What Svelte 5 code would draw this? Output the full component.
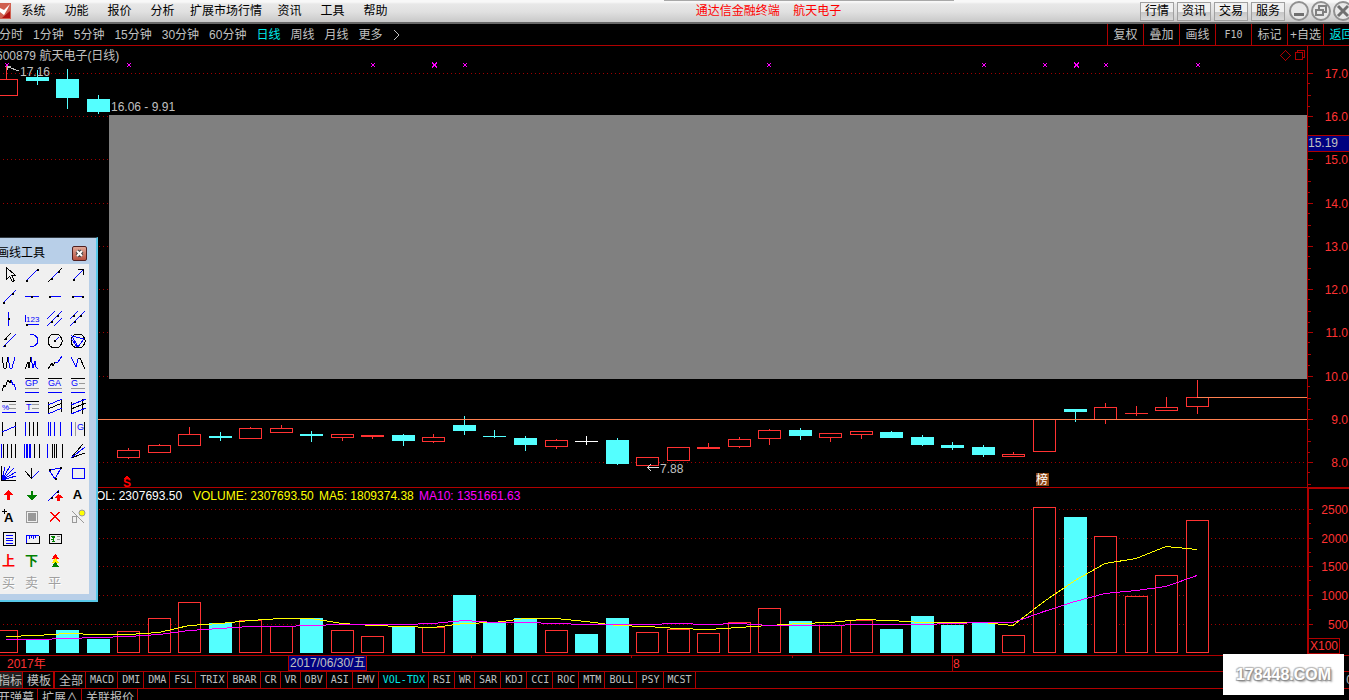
<script>
    const menus = ["系统", "功能", "报价", "分析", "扩展市场行情", "资讯", "工具", "帮助"];
    const shortcuts = ["行情", "资讯", "交易", "服务"];
    const periods = ["分时", "1分钟", "5分钟", "15分钟", "30分钟", "60分钟", "日线", "周线", "月线", "更多"];
    const actions = ["复权", "叠加", "画线", "F10", "标记", "+自选", "返回"];
    const indicators = [
        "MACD", "DMI", "DMA", "FSL", "TRIX", "BRAR", "CR", "VR", "OBV", "ASI", "EMV", "VOL-TDX",
        "RSI", "WR", "SAR", "KDJ", "CCI", "ROC", "MTM", "BOLL", "PSY", "MCST"
    ];

    let period = $state("日线");
    let indicator = $state("VOL-TDX");
    let showTools = $state(true);

    const STEP = 30.53;
    const cx = (i) => Math.round(6 + i * STEP);

    // kind, body top, body bottom, high, low, volume top, ma5, ma10
    const days = [
        ["up", 79, 95, 64, 95, 630, 636, 639],
        ["down", 77, 80, 70, 84, 640, 635, 639],
        ["down", 79, 97, 69, 108, 630, 633, 638],
        ["down", 99, 111, 95, 113, 639, 634, 637],
        ["up", 450, 457, 448, 458, 631, 634, 636],
        ["up", 445, 452, 444, 452, 618, 632, 634],
        ["up", 434, 445, 427, 445, 602, 625, 630],
        ["down", 436, 437, 432, 440, 623, 623, 628],
        ["up", 428, 438, 427, 438, 620, 620, 626],
        ["up", 428, 432, 425, 432, 626, 618, 626],
        ["down", 434, 435, 431, 441, 618, 618, 625],
        ["up", 434, 437, 434, 440, 630, 623, 624],
        ["up", 435, 436, 435, 438, 636, 625, 624],
        ["down", 435, 440, 434, 445, 626, 626, 624],
        ["up", 437, 441, 434, 442, 627, 627, 623],
        ["down", 425, 430, 416, 434, 595, 623, 620],
        ["down", 436, 436, 430, 437, 622, 622, 622],
        ["down", 438, 444, 436, 450, 618, 618, 622],
        ["up", 440, 446, 439, 448, 630, 618, 623],
        ["flat", 441, 441, 436, 444, 634, 621, 624],
        ["down", 440, 463, 438, 464, 618, 625, 624],
        ["up", 457, 465, 457, 465, 632, 626, 624],
        ["up", 447, 460, 447, 460, 629, 628, 623],
        ["up", 447, 448, 443, 448, 633, 629, 624],
        ["up", 439, 446, 437, 447, 622, 627, 623],
        ["up", 430, 438, 429, 444, 608, 625, 625],
        ["down", 430, 435, 428, 439, 621, 623, 625],
        ["up", 433, 437, 433, 441, 625, 622, 625],
        ["up", 431, 434, 431, 438, 620, 619, 624],
        ["down", 432, 437, 431, 437, 629, 620, 624],
        ["down", 437, 444, 435, 445, 616, 622, 624],
        ["down", 445, 447, 442, 449, 625, 622, 623],
        ["down", 447, 454, 445, 456, 622, 622, 622],
        ["up", 454, 456, 452, 456, 635, 625, 622],
        ["up", 419, 451, 419, 451, 507, 601, 611],
        ["down", 409, 411, 409, 421, 517, 580, 601],
        ["up", 407, 419, 403, 423, 536, 563, 593],
        ["up", 413, 413, 406, 415, 596, 558, 590],
        ["up", 407, 410, 397, 410, 575, 546, 586],
        ["up", 397, 406, 380, 413, 520, 549, 575]
    ].map(([kind, top, bottom, high, low, vol, ma5, ma10], i) => ({ x: cx(i), kind, top, bottom, high, low, vol, ma5, ma10 }));

    const line = (key) => days.map((d) => `${d.x},${d[key] + 0.5}`).join(" ");

    const prices = [17, 16, 15, 14, 13, 12, 11, 10, 9, 8].map((p, i) => ({ label: p.toFixed(1), y: Math.round(73 + i * 43.22) }));
    const volumes = [2500, 2000, 1500, 1000, 500].map((v, i) => ({ label: v, y: Math.round(509 + i * 28.7) }));
    const marks = [7, 129, 373, 434, 465, 769, 984, 1045, 1076, 1106, 1198];
    const bigMarks = [434, 1076];

    // k black, b blue, s grey, r red, g green strokes; dots are 3px handles
    const tools = [
        { name: "选择", k: "M7.500 2.500v12l3-3 3 5 2-1-3-5h4z" },
        { name: "线段", b: "M5 15L15 5", dots: [[4.5, 15.5], [15.5, 4.5]] },
        { name: "直线", k: "M3 17L17 3", b: "M6 14L14 6", dots: [[6.5, 13.5], [13.5, 6.5]] },
        { name: "箭头", b: "M5 15L15 5", k: "M10 4.500h5.500v5.500", dots: [[5.5, 14.5]] },
        { name: "射线", b: "M4 16L17 3", dots: [[4.5, 15.5], [13.5, 6.5]] },
        { name: "水平线", b: "M3 9.500h14", dots: [[9.5, 9.5]] },
        { name: "水平射线", b: "M4 9.500h12", dots: [[4.5, 9.5]] },
        { name: "水平线段", b: "M4 9.500h12", dots: [[4.5, 9.5], [14.5, 9.5]] },
        { name: "垂直线", b: "M9.500 3v14", dots: [[9.5, 9.5]] },
        { name: "价格标注", b: "M4 15.500h13M3.500 6v7", label: "123", size: 8, lx: 4, ly: 13, dots: [[4.5, 15.5]] },
        { name: "平行线", b: "M2 10L10 2M2 17L17 2M9 17L17 9", dots: [[6.5, 12.5], [12.5, 6.5]] },
        { name: "平行射线", b: "M2 10L10 2M2 17L17 2", dots: [[6.5, 12.5], [12.5, 6.5], [5.5, 6.5]] },
        { name: "通道线", k: "M5 9L12 2", b: "M4 16L17 3", dots: [[6.5, 7.5], [5.5, 14.5]] },
        { name: "圆弧", b: "M8 3.500h3q5 2 5 6t-5 6h-3" },
        { name: "圆", k: "M10 3a7 7 0 1 0 .1 0", b: "M10 10L14 6", dots: [[9.5, 9.5]] },
        { name: "外接圆", k: "M10 3a7 7 0 1 0 .1 0", b: "M4 5L16 8 10 16zM3.500 8L9 16" },
        { name: "W形", k: "M3 4L5 15 7 15 9 4", b: "M9 4L11 15 13 15 16 4" },
        { name: "头肩形", k: "M3 16L6 9 7 15 9 4", b: "M9 4L11 15 13 8 14 14 16 16" },
        { name: "上升浪", k: "M3 16L7 10 8 13 10 9", b: "M10 9L13 9 17 3" },
        { name: "下降浪", b: "M3 4L8 14 10 6", k: "M10 6L12 5 17 16" },
        { name: "波浪", k: "M3 16L5 10 6 12 9 5 11 8 12 5", b: "M12 5L14 10 15 9 17 15" },
        { name: "黄金价位", k: "M3 3.500h14", s: "M3 13.500h14", b: "M3 17h14", label: "GP", size: 9, lx: 3, ly: 11 },
        { name: "黄金目标", k: "M3 3.500h14", s: "M3 13.500h14", b: "M3 17h14", label: "GA", size: 9, lx: 3, ly: 11 },
        { name: "黄金分割", k: "M3 3.500h14", s: "M11 8.500h6M3 13.500h14", b: "M3 17h14", label: "G", size: 9, lx: 3, ly: 11 },
        { name: "百分比线", k: "M3 4.500h14", s: "M10 7.500h7M10 11.500h7", b: "M3 15.500h14", label: "%", size: 8, lx: 3, ly: 13 },
        { name: "波段线", k: "M3 4.500h14", s: "M10 7.500h7M10 11.500h7", b: "M3 15.500h14", label: "T", size: 9, lx: 4, ly: 13 },
        { name: "线性回归", k: "M3.500 5v12M16.500 2v13M3 12L17 6", b: "M3 8L17 2M3 17L17 11" },
        { name: "线性回归带", k: "M3.500 5v12M14.500 2v15M3 12L18 6", b: "M3 8L18 2M3 17L18 11" },
        { name: "回归通道", k: "M3.500 3v14M16.500 3v14", b: "M3 13L17 7" },
        { name: "周期线", b: "M3.500 3v14", k: "M7.500 3v14M11.500 3v14M15.500 3v14" },
        { name: "费氏周期", b: "M3.500 3v14M5.500 3v14M9.500 3v14M15.500 3v14" },
        { name: "甘氏周期", b: "M3.500 3v14", s: "M7.500 3v14", k: "M16.500 3v14", label: "G", size: 9, lx: 9, ly: 11 },
        { name: "阻速周期", b: "M2.500 3v14", k: "M4.500 3v14M8.500 3v14M12.500 3v14M16.500 3v14" },
        { name: "对称周期", b: "M2.500 3v14M4.500 3v14M5.500 3v14M7.500 3v14M8.500 3v14", k: "M12.500 3v14M17.500 3v14" },
        { name: "时间周期", b: "M2.500 3v14", k: "M7.500 3v14M9.500 3v14M11.500 3v14M17.500 3v14" },
        { name: "阻速线", k: "M3 17L15 3M3 17L17 12", b: "M3 17L17 6" },
        { name: "甘氏线", k: "M2.500 3v14.500h14", b: "M3 17L6 4M3 17L11 3M3 17L15 5M3 17L17 9M3 17L17 13" },
        { name: "安德鲁线", k: "M9.500 5v10M3 8L10 16", b: "M10 15L17 8" },
        { name: "三角形", b: "M4 7L16 5 10 16z", dots: [[4.5, 6.5], [15.5, 4.5], [10.5, 15.5]] },
        { name: "矩形", b: "M4 5.500h12.500v10h-12.500z" },
        { name: "上涨标记", r: "M9.500 5v10M8.500 6v9M10.500 6v9M5 9.500h9M6 8.500h7M7 7.500h5M8 6.500h3" },
        { name: "下跌标记", g: "M9.500 6v9M10.500 6v9M5 10.500h10M6 11.500h8M7 12.500h6M8 13.500h4" },
        { name: "拐点标记", b: "M3 16L14 5", r: "M13.500 9v7M12.500 10v6M14.500 10v6M10 12.500h8M11 11.500h6M12 10.500h4", dots: [[6.5, 12.5], [12.5, 6.5]] },
        { name: "文字", char: "A", tone: "black" },
        { name: "添加文字", char: "A", tone: "black", k: "M3 4.500h5M5.500 2v5" },
        { name: "全选", s: "M4.500 4.500h11v11h-11zM6 7.500h8M6 8.500h8M6 9.500h8M6 10.500h8M6 11.500h8M6 12.500h8M6 6.500h8M6 13.500h8" },
        { name: "删除", r: "M5 5L15 15M15 5L5 15M6 5L15 14M14 5L5 14" },
        { name: "隐藏", s: "M4.500 9.500h4v6h-4zM4 4L16 16", ball: true },
        { name: "列表", k: "M4.500 3.500h11.500v13h-11.500z", b: "M7 6.500h7M7 9.500h7M7 11.500h7M7 14.500h7" },
        { name: "测量", k: "M4 14.500h13v-8", b: "M4.500 14v-8h12M7.500 6v4M9.500 6v3M11.500 6v4M13.500 6v3" },
        { name: "图片", k: "M4.500 5.500h12v9h-12z", g: "M6 7.500h4M7 8.500h3M6 10.500h3M7 12.500h3M8.500 7v6", s: "M12 7.500h3M12 10.500h3" },
        { name: "", blank: true },
        { name: "上", char: "上", tone: "red" },
        { name: "下", char: "下", tone: "green" },
        { name: "级别", stack: true },
        { name: "", blank: true },
        { name: "买", char: "买", tone: "silver" },
        { name: "卖", char: "卖", tone: "silver" },
        { name: "平", char: "平", tone: "silver" }
    ];
</script>

<div class="app">
    <header>
        <svg class="logo" width="12" height="16" viewBox="0 0 12 16" aria-hidden="true">
            <rect width="11" height="16" fill="#d06050" />
            <path d="M0 5L4 7 10 1L7 7 4 12 0 9z" fill="#fff" />
            <path d="M2 15L10 8V15z" fill="#b01010" />
        </svg>
        <nav class="menu">
            {#each menus as item}
                <button>{item}</button>
            {/each}
        </nav>
        <h1>通达信金融终端&nbsp;&nbsp;&nbsp; 航天电子</h1>
        <div class="shortcuts">
            {#each shortcuts as item}
                <button>{item}</button>
            {/each}
        </div>
        <div class="window-buttons">
            <button aria-label="最小化">
                <svg width="16" height="16" viewBox="0 0 16 16"><path d="M3 11.500h10" stroke="#707070" stroke-width="3" /></svg>
            </button>
            <button aria-label="还原">
                <svg width="16" height="16" viewBox="0 0 16 16" fill="none" stroke="#808080" stroke-width="2"><path d="M6 6V3h7v6h-3M3 7h7v5H3z" /></svg>
            </button>
            <button aria-label="关闭">
                <svg width="16" height="16" viewBox="0 0 16 16" stroke="#707070" stroke-width="3"><path d="M3 3L13 13M13 3L3 13" /></svg>
            </button>
        </div>
        <span class="tab-shadow"></span>
    </header>

    <div class="toolbar">
        <nav class="periods">
            {#each periods as item}
                <button class:active={item === period} onclick={() => (period = item)}>{item}</button>
            {/each}
            <svg width="8" height="12" viewBox="0 0 8 12" fill="none" stroke="#c0c0c0"><path d="M1 1L6 6 1 11" /></svg>
        </nav>
        <div class="actions">
            {#each actions as item}
                <button class:active={item === "返回"} class:mono={item === "F10"}>{item}</button>
            {/each}
        </div>
    </div>

    <svg class="chart" viewBox="0 46 1349 442" role="img" aria-label="航天电子日线">
        <g class="crisp">
            {#each prices as p}
                <line class="dots" x1="3" x2="1307" y1={p.y + 0.5} y2={p.y + 0.5} />
                <rect class="dark" x="1308" y={p.y} width="5" height="1" />
                <rect class="dark" x="1308" y={p.y + 10} width="2" height="1" />
                <rect class="dark" x="1308" y={p.y + 22} width="3" height="1" />
                <rect class="dark" x="1308" y={p.y + 33} width="2" height="1" />
            {/each}
            <rect x="109" y="115" width="1198" height="264" fill="#808080" />
            {#each days as d}
                <g class={d.kind}>
                    {#if d.bottom - d.top < 2 || d.kind === "down"}
                        <rect class="solid" x={d.x - 11} y={d.top} width="23" height={d.bottom - d.top + 1} />
                        <rect class="solid" x={d.x} y={d.high} width="1" height={d.low - d.high + 1} />
                    {:else}
                        <rect class="solid" x={d.x} y={d.high} width="1" height={d.top - d.high} />
                        <rect class="solid" x={d.x} y={d.bottom} width="1" height={d.low - d.bottom + 1} />
                        <rect class="hollow" x={d.x - 10.5} y={d.top + 0.5} width="22" height={d.bottom - d.top} />
                    {/if}
                </g>
            {/each}
            <rect x="98" y="419" width="1209" height="1" fill="#ff8050" />
            <rect x="1197" y="397" width="110" height="1" fill="#ff8050" />
            {#each marks as x}
                {#if bigMarks.includes(x)}
                    <path d="M{x - 2} 62.500L{x + 3} 67.500M{x + 3} 62.500L{x - 2} 67.500" stroke="#f0f" stroke-width="2" />
                {:else}
                    <path d="M{x - 2} 63L{x + 2} 67M{x + 2} 63L{x - 2} 67" stroke="#f0f" />
                {/if}
            {/each}
            <path d="M8 67L19 71M7 70V66.500H11" fill="none" stroke="#c0c0c0" />
            <path d="M647 467.500H659M651 464L647.500 467.500 651 471" fill="none" stroke="#e0e0e0" />
            <path d="M1285.500 50.500L1290.500 55.500 1285.500 60.500 1280.500 55.500zM1295.500 52.500h7v7h-7zM1297.500 52V50.500h7v7h-2" fill="none" stroke="#b00000" />
            <path d="M124 478.500H130M125 477.500H129M126 476.500H128" stroke="red" />
            <rect x="1036" y="473" width="13" height="13" fill="#8b4513" />
            <rect class="dark" x="1307" y="46" width="1" height="442" />
            <rect class="dark" x="0" y="487" width="1349" height="1" />
            <rect class="dark" x="1308" y="135" width="41" height="17" />
            <rect x="1308" y="136" width="41" height="15" fill="#000080" />
        </g>
        <g class="grey">
            <text x="-4" y="60">600879 航天电子(日线)</text>
            <text x="20" y="76">17.16</text>
            <text x="111" y="111">16.06 - 9.91</text>
            <text x="660" y="473">7.88</text>
            <text x="1308" y="147">15.19</text>
        </g>
        <text x="123" y="487" fill="red" class="bold">S</text>
        <text x="1036" y="484" fill="#fff">榜</text>
        <g class="axis">
            {#each prices as p}
                <text x="1348" y={p.y + 5}>{p.label}</text>
            {/each}
        </g>
    </svg>

    <svg class="chart" viewBox="0 488 1349 168" role="img" aria-label="成交量">
        <g class="crisp">
            {#each volumes as v}
                <line class="dots" x1="3" x2="1307" y1={v.y + 0.5} y2={v.y + 0.5} />
                <rect class="dark" x="1309" y={v.y} width="4" height="1" />
                <rect class="dark" x="1309" y={v.y + 14} width="2" height="1" />
            {/each}
            {#each days as d}
                <g class={d.kind}>
                    {#if d.kind === "up"}
                        <rect class="hollow" x={d.x - 10.5} y={d.vol + 0.5} width="22" height={652 - d.vol} />
                    {:else}
                        <rect fill="#54ffff" x={d.x - 11} y={d.vol} width="23" height={653 - d.vol} />
                    {/if}
                </g>
            {/each}
            <polyline points={line("ma5")} fill="none" stroke="#ff0" />
            <polyline points={line("ma10")} fill="none" stroke="#f0f" />
            <rect class="dark" x="1307" y="488" width="2" height="168" />
            <rect class="dark" x="1307" y="488" width="42" height="1" />
            <rect class="dark" x="0" y="655" width="1349" height="1" />
            <rect x="1308.5" y="638.5" width="31" height="15" fill="none" stroke="#b00000" />
        </g>
        <text x="88" y="500" fill="#fff">VOL: 2307693.50</text>
        <text x="193" y="500" fill="#ff0">VOLUME: 2307693.50</text>
        <text x="319" y="500" fill="#ff0">MA5: 1809374.38</text>
        <text x="419" y="500" fill="#f0f">MA10: 1351661.63</text>
        <g class="axis">
            {#each volumes as v}
                <text x="1348" y={v.y + 5}>{v.label}</text>
            {/each}
            <text x="1338" y="650">X100</text>
        </g>
    </svg>

    <svg class="chart" viewBox="0 656 1349 16" role="img" aria-label="日期">
        <g class="crisp">
            <rect x="288" y="656" width="79" height="15" fill="#b00000" />
            <rect x="289" y="656" width="77" height="14" fill="#000080" />
            <path d="M471.500 656v2M631.500 656v2M792.500 656v2M952.500 656v15" stroke="#b00000" />
            <rect class="dark" x="0" y="671" width="1349" height="1" />
        </g>
        <text class="red" x="7" y="668">2017年</text>
        <text class="grey" x="290" y="667">2017/06/30/五</text>
        <text class="red" x="953" y="668">8</text>
    </svg>

    <div class="tabs">
        <button class="cjk pressed">指标</button>
        <button class="cjk template">模板</button>
        <button class="cjk">全部</button>
        {#each indicators as item}
            <button class:active={item === indicator} onclick={() => (indicator = item)}>{item}</button>
        {/each}
        <span class="scale">0</span>
    </div>

    <footer>
        <button>开弹幕</button>
        <button>扩展∧</button>
        <button>关联报价</button>
    </footer>

    {#if showTools}
        <section class="palette">
            <div class="palette-title">
                <h2>画线工具</h2>
                <button aria-label="关闭画线工具" onclick={() => (showTools = false)}>
                    <svg width="11" height="9" viewBox="0 0 11 9"><path d="M3 2L8 7M8 2L3 7" stroke="#444" stroke-width="4" /><path d="M3 2L8 7M8 2L3 7" stroke="#fff" stroke-width="2" /></svg>
                </button>
            </div>
            <div class="palette-grid">
                {#each tools as t}
                    {#if t.blank}
                        <span></span>
                    {:else}
                        <button title={t.name} aria-label={t.name}>
                            {#if t.char && !t.k}
                                <span class="char {t.tone}" class:latin={t.char === "A"}>{t.char}</span>
                            {:else}
                                <svg class="crisp" width="20" height="20" viewBox="0 0 20 20" fill="none">
                                    {#if t.s}<path d={t.s} stroke="#999" />{/if}
                                    {#if t.k}<path d={t.k} stroke="#000" />{/if}
                                    {#if t.b}<path d={t.b} stroke="#00f" />{/if}
                                    {#if t.r}<path d={t.r} stroke="#f00" />{/if}
                                    {#if t.g}<path d={t.g} stroke="#008000" />{/if}
                                    {#each t.dots ?? [] as [x, y]}
                                        <rect x={x - 1} y={y - 1} width="2" height="2" fill="#000" />
                                    {/each}
                                    {#if t.label}<text x={t.lx} y={t.ly} font-size={t.size} fill="#00f">{t.label}</text>{/if}
                                    {#if t.char}<text x="5" y="15" font-size="13" font-weight="bold" fill="#000">{t.char}</text>{/if}
                                    {#if t.ball}<circle class="ball" cx="14" cy="6" r="3" />{/if}
                                    {#if t.stack}
                                        <path d="M10.500 3L14.500 8h-8z" fill="red" />
                                        <path d="M10.500 7L14.500 12h-8z" fill="#fe0" />
                                        <path d="M10.500 11L14.500 16h-8z" fill="#008000" />
                                    {/if}
                                </svg>
                            {/if}
                        </button>
                    {/if}
                {/each}
            </div>
        </section>
    {/if}

    <div class="watermark">178448.COM</div>
</div>

<style>
    :global(body) {
        margin: 0;
        background: #000;
    }

    .app {
        position: relative;
        display: flex;
        flex-direction: column;
        height: 100vh;
        overflow: hidden;
        background: #000;
        color: #c0c0c0;
        font-family: "Liberation Sans", "Noto Sans CJK SC", sans-serif;
        font-size: 12px;
        line-height: 16px;
    }

    button {
        margin: 0;
        padding: 0;
        border: 0;
        background: none;
        color: inherit;
        font: inherit;
        white-space: nowrap;
    }

    h1, h2 {
        margin: 0;
        font-size: 12px;
        font-weight: normal;
    }

    header {
        position: relative;
        display: flex;
        flex: none;
        align-items: center;
        box-sizing: border-box;
        height: 24px;
        overflow: hidden;
        border-bottom: 2px solid #686868;
        background: linear-gradient(#f8f8f8 2px, #e8e8e8 4px, #e0e0e0 12px, #c8c8c8);
        color: #000;
    }

    .logo {
        flex: none;
    }

    .menu {
        display: flex;
        flex: none;
    }

    .menu button {
        min-width: 43px;
        padding: 0 6px;
    }

    h1 {
        flex: 1;
        color: #f00;
        text-align: center;
        white-space: nowrap;
    }

    .shortcuts {
        display: flex;
        gap: 3px;
    }

    .shortcuts button {
        box-sizing: border-box;
        width: 34px;
        height: 19px;
        border: 1px solid #a0a0a0;
        background: linear-gradient(#f0f0f0 50%, #c8c8c8 55%, #d8d8d8);
    }

    .window-buttons {
        display: flex;
        gap: 2px;
        margin: 0 -4px 0 4px;
    }

    .window-buttons button {
        box-sizing: border-box;
        display: grid;
        place-items: center;
        width: 20px;
        height: 20px;
        border: 2px solid #909090;
        border-radius: 50%;
        background: #e8e8e8;
    }

    .tab-shadow {
        position: absolute;
        top: 0;
        left: 664px;
        width: 290px;
        height: 1px;
        background: #a8a8a8;
    }

    .toolbar {
        display: flex;
        flex: none;
        justify-content: space-between;
        box-sizing: border-box;
        height: 22px;
        overflow: hidden;
        border-bottom: 1px solid #b00000;
    }

    .periods {
        display: flex;
        align-items: center;
        gap: 10px;
        margin-left: -1px;
    }

    .actions {
        display: flex;
        margin-right: -10px;
    }

    .actions button {
        box-sizing: border-box;
        width: 36px;
        border-left: 1px solid #b00000;
    }

    .mono {
        font-family: "DejaVu Sans Mono", monospace;
        font-size: 10px;
    }

    .active {
        color: #00e8e8;
    }

    .chart {
        display: block;
        flex: none;
        width: 100%;
        height: auto;
    }

    .crisp {
        shape-rendering: crispEdges;
    }

    .dots {
        stroke: #a00000;
        stroke-dasharray: 1 3;
    }

    .dark {
        fill: #b00000;
    }

    .up .solid {
        fill: #ff3232;
    }

    .down .solid {
        fill: #54ffff;
    }

    .flat .solid {
        fill: #fff;
    }

    .hollow {
        fill: #000;
        stroke: #ff3232;
    }

    .grey {
        fill: #c0c0c0;
    }

    .red {
        fill: #ff3232;
    }

    .axis {
        fill: #ff3232;
        text-anchor: end;
    }

    .bold {
        font-weight: bold;
    }

    .tabs {
        display: flex;
        flex: none;
        box-sizing: border-box;
        height: 17px;
        border-bottom: 1px solid #b00000;
    }

    .tabs button {
        padding: 0 3px 0 4px;
        border-right: 1px solid #b00000;
        font-family: "DejaVu Sans Mono", monospace;
        font-size: 10px;
    }

    .tabs .cjk {
        padding: 0 2px 0 4px;
        font-family: "Noto Sans CJK SC", sans-serif;
        font-size: 12px;
    }

    .tabs .pressed {
        margin-left: -6px;
        padding-right: 0;
        background: #202020;
    }

    .tabs .template {
        border-right-width: 2px;
    }

    .scale {
        margin: 0 -4px 0 auto;
    }

    footer {
        display: flex;
        flex: none;
        height: 17px;
        margin-left: -6px;
    }

    footer button {
        padding: 0 3px 0 4px;
        border-right: 1px solid #b00000;
    }

    .palette {
        position: absolute;
        top: 237px;
        left: -10px;
        box-sizing: border-box;
        width: 108px;
        padding: 0 7px 6px 6px;
        border: 1px solid #303840;
        border-right: 2px solid #58c8e8;
        border-bottom: 2px solid #58c8e8;
        background: #b8cfe8;
        color: #000;
    }

    .palette-title {
        display: flex;
        align-items: center;
        justify-content: space-between;
        height: 26px;
        padding: 4px 2px 0 0;
        box-sizing: border-box;
    }

    .palette-title button {
        display: grid;
        place-items: center;
        box-sizing: border-box;
        width: 15px;
        height: 15px;
        border: 1px solid #502020;
        border-radius: 2px;
        background: linear-gradient(#e0a898, #b85040);
    }

    .palette-grid {
        display: grid;
        grid-template-columns: repeat(4, 23px);
        grid-auto-rows: 22px;
        background: #f0f0f0;
    }

    .palette-grid button {
        display: grid;
        place-items: center;
    }

    .ball {
        fill: #ff0;
        stroke: #999;
        shape-rendering: auto;
    }

    .char {
        font-size: 13px;
    }

    .latin {
        font-weight: bold;
    }

    .black {
        color: #000;
    }

    .red.char {
        color: #f00;
        font-weight: bold;
    }

    .green {
        color: #008000;
        font-weight: bold;
    }

    .silver {
        color: #a0a0a0;
        text-shadow: 1px 1px #fff;
    }

    .watermark {
        position: absolute;
        right: 5px;
        bottom: 5px;
        width: 121px;
        background: #fff;
        color: #fff;
        font-family: "Liberation Sans Narrow", "Liberation Sans", sans-serif;
        font-size: 16px;
        font-weight: bold;
        line-height: 41px;
        text-align: center;
        text-shadow: 1px 1px 1px #888, -1px -1px 1px #bbb, 1px -1px 1px #bbb, -1px 1px 1px #999, 2px 2px 2px #aaa;
    }
</style>
